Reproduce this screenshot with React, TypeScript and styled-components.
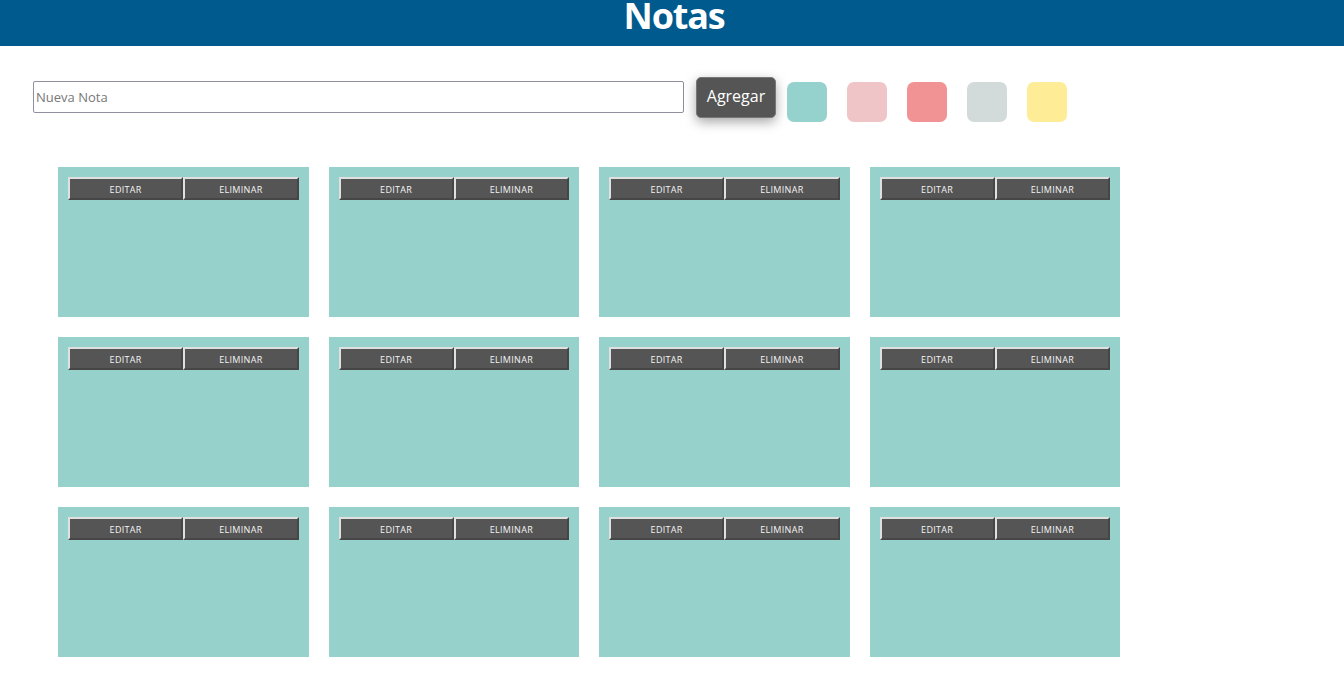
import React from "react";
import styled, { createGlobalStyle } from "styled-components";

const Global = createGlobalStyle`
  html, body { margin: 0; padding: 0; background: #fff; }
  body { font-family: "Open Sans", "Noto Sans", sans-serif; }
`;

const Header = styled.header`
  height: 46px;
  background: #005a8e;
  display: flex;
  align-items: flex-start;
  justify-content: center;
`;

const Title = styled.h1`
  margin: 0;
  padding: 1px 0 0 0;
  color: #fff;
  font-family: "Open Sans", sans-serif;
  font-weight: 700;
  font-size: 36px;
  line-height: 30px;
  letter-spacing: -1.2px;
  transform: translateX(2px);
`;

const FormRow = styled.div`
  display: flex;
  align-items: center;
  padding: 29px 0 0 33px;
  height: 45px;
`;

const Input = styled.input`
  box-sizing: border-box;
  width: 651px;
  height: 32px;
  margin-bottom: 2px;
  border: 1px solid #8f8f9d;
  border-radius: 2px;
  padding: 0 2px;
  font-family: "Open Sans", sans-serif;
  font-size: 13px;
  color: #333;
  outline: none;
  &::placeholder { color: #777; }
`;

const AddButton = styled.button`
  box-sizing: border-box;
  margin-left: 12px;
  width: 80px;
  height: 41px;
  background: #555;
  color: #fff;
  border: 1px solid #777;
  border-radius: 5px;
  font-family: "Open Sans", sans-serif;
  font-size: 16px;
  line-height: 1;
  padding: 0 0 3px 0;
  box-shadow: 0 4px 12px rgba(0, 0, 0, 0.35);
  cursor: pointer;
`;

const Swatches = styled.div`
  display: flex;
  gap: 20px;
  margin-left: 11px;
  margin-top: 9px;
`;

const Swatch = styled.div<{ $c: string }>`
  width: 40px;
  height: 40px;
  border-radius: 7px;
  background: ${(p) => p.$c};
`;

const Grid = styled.div`
  display: grid;
  grid-template-columns: repeat(4, 250.5px);
  column-gap: 20px;
  row-gap: 20px;
  padding: 47px 0 0 58px;
`;

const Card = styled.div<{ $c: string }>`
  height: 150px;
  background: ${(p) => p.$c};
  padding: 10px;
  box-sizing: border-box;
`;

const Actions = styled.div`
  display: grid;
  grid-template-columns: 1fr 1fr;
`;

const NoteButton = styled.button`
  box-sizing: border-box;
  height: 23px;
  background: #555;
  color: #f4f4f4;
  border: 2px outset #c8c8c8;
  border-top-color: #e0e0e0;
  border-left-color: #e0e0e0;
  border-right-color: #9a9a9a;
  border-bottom-color: #9a9a9a;
  font-family: "Open Sans", sans-serif;
  font-size: 9px;
  letter-spacing: 0.3px;
  text-transform: uppercase;
  padding: 1px 0 0 0;
  cursor: pointer;
`;

const colors = ["#96d2cd", "#f0c5c7", "#f19394", "#d3dbda", "#ffec96"];

export default function App() {
  const notes = Array.from({ length: 12 }, (_, i) => i);
  return (
    <>
      <Global />
      <Header>
        <Title>Notas</Title>
      </Header>
      <FormRow>
        <Input placeholder="Nueva Nota" />
        <AddButton>Agregar</AddButton>
        <Swatches>
          {colors.map((c) => (
            <Swatch key={c} $c={c} />
          ))}
        </Swatches>
      </FormRow>
      <Grid>
        {notes.map((n) => (
          <Card key={n} $c="#96d1cc">
            <Actions>
              <NoteButton>Editar</NoteButton>
              <NoteButton>Eliminar</NoteButton>
            </Actions>
          </Card>
        ))}
      </Grid>
    </>
  );
}
